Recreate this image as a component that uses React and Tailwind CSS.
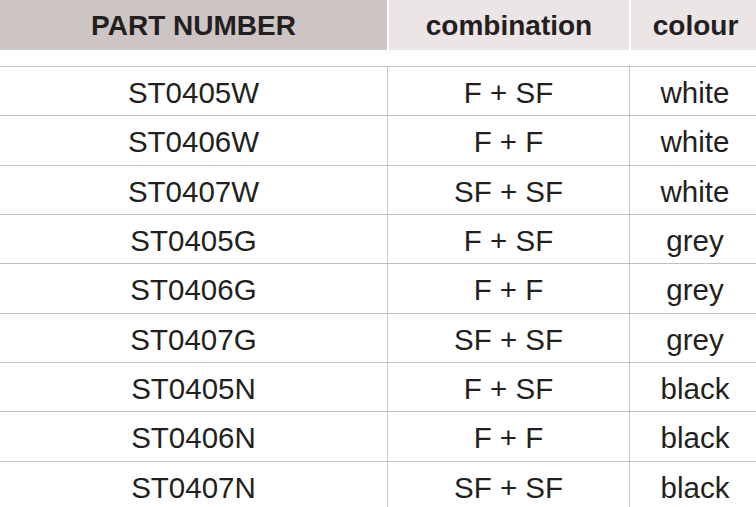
import React from "react";

const rows = [
  ["ST0405W", "F + SF", "white"],
  ["ST0406W", "F + F", "white"],
  ["ST0407W", "SF + SF", "white"],
  ["ST0405G", "F + SF", "grey"],
  ["ST0406G", "F + F", "grey"],
  ["ST0407G", "SF + SF", "grey"],
  ["ST0405N", "F + SF", "black"],
  ["ST0406N", "F + F", "black"],
  ["ST0407N", "SF + SF", "black"],
];

export default function App() {
  return (
    <div
      className="w-[756px] h-[507px] overflow-hidden bg-white text-[#231f20]"
      style={{ fontFamily: '"Liberation Sans", Arial, sans-serif' }}
    >
      <div className="w-[760px]">
        <div className="flex h-[50px] gap-[2px] font-bold text-[28px]">
          <div className="w-[387px] bg-[#cdc4c4] flex items-center justify-center pt-[1px]">PART NUMBER</div>
          <div className="w-[240px] bg-[#ebe5e5] flex items-center justify-center pt-[1px]">combination</div>
          <div className="flex-1 bg-[#ebe5e5] flex items-center justify-center pt-[1px]">colour</div>
        </div>
        <div className="h-[16px]" />
        {rows.map((r, i) => (
          <div key={i} className="flex h-[49.33px] border-t border-[#c4bebe] text-[29.5px]">
            <div className="w-[388px] border-r border-[#cbc5c5] flex items-center justify-center pt-[4px]">{r[0]}</div>
            <div className="w-[242px] border-r border-[#cbc5c5] flex items-center justify-center pt-[4px]">{r[1]}</div>
            <div className="flex-1 flex items-center justify-center pt-[4px]">{r[2]}</div>
          </div>
        ))}
      </div>
    </div>
  );
}
